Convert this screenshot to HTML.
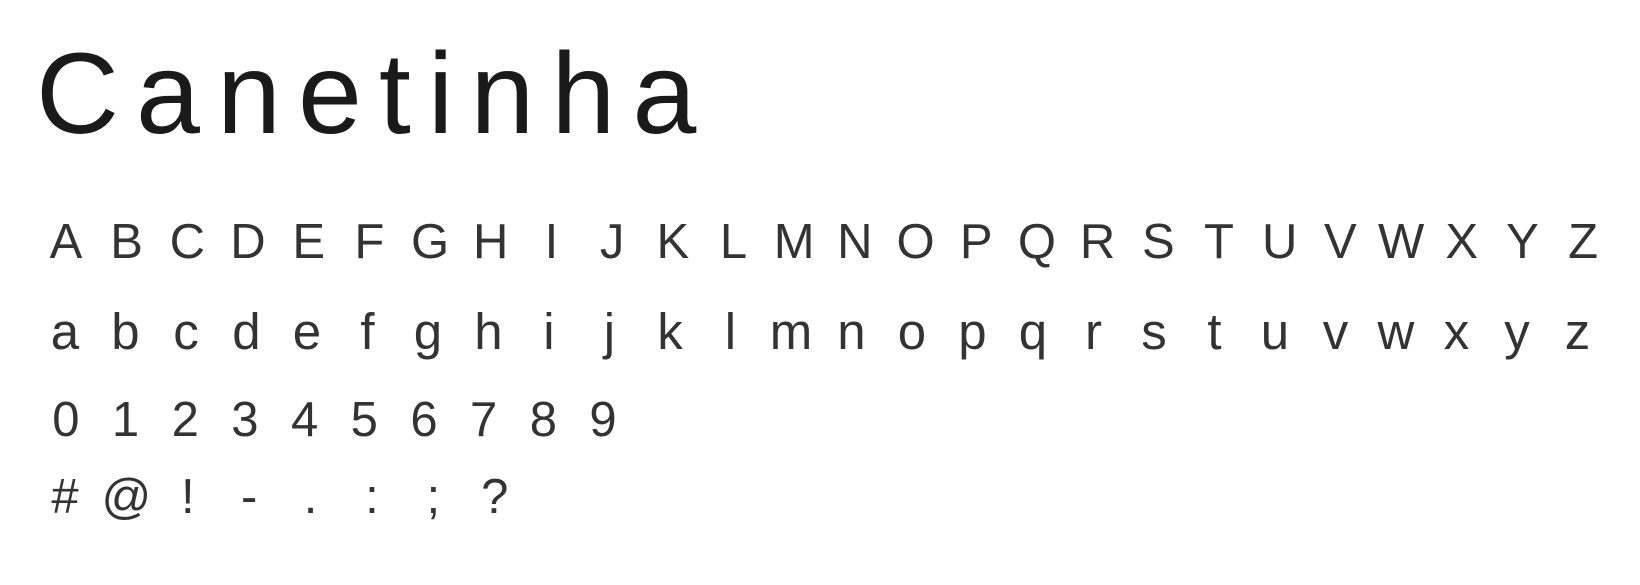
<!DOCTYPE html>
<html><head><meta charset="utf-8"><style>
html,body{margin:0;padding:0;background:#fff;width:1640px;height:585px;overflow:hidden}
body{position:relative;font-family:"Liberation Sans",sans-serif;color:#222}
.t{position:absolute;left:36px;top:37px;font-size:115px;line-height:1;letter-spacing:17px;font-weight:normal;color:#1a1a1a}
.r{position:absolute;display:flex;font-size:49px;line-height:1;font-weight:normal;color:#333}
.r span{display:block;text-align:center}
.u span{width:60.7px}.l span{width:60.5px}.d span{width:59.7px}.s span{width:61.4px}
</style></head><body>
<div class="t">Canetinha</div>
<div class="r u" style="left:35.6px;top:218px"><span>A</span><span>B</span><span>C</span><span>D</span><span>E</span><span>F</span><span>G</span><span>H</span><span>I</span><span>J</span><span>K</span><span>L</span><span>M</span><span>N</span><span>O</span><span>P</span><span>Q</span><span>R</span><span>S</span><span>T</span><span>U</span><span>V</span><span>W</span><span>X</span><span>Y</span><span>Z</span></div>
<div class="r l" style="left:34.7px;top:306px;font-size:51px"><span>a</span><span>b</span><span>c</span><span>d</span><span>e</span><span>f</span><span>g</span><span>h</span><span>i</span><span>j</span><span>k</span><span>l</span><span>m</span><span>n</span><span>o</span><span>p</span><span>q</span><span>r</span><span>s</span><span>t</span><span>u</span><span>v</span><span>w</span><span>x</span><span>y</span><span>z</span></div>
<div class="r d" style="left:36px;top:396px"><span>0</span><span>1</span><span>2</span><span>3</span><span>4</span><span>5</span><span>6</span><span>7</span><span>8</span><span>9</span></div>
<div class="r s" style="left:34.3px;top:473px"><span>#</span><span>@</span><span>!</span><span>-</span><span>.</span><span>:</span><span>;</span><span>?</span></div>
</body></html>
